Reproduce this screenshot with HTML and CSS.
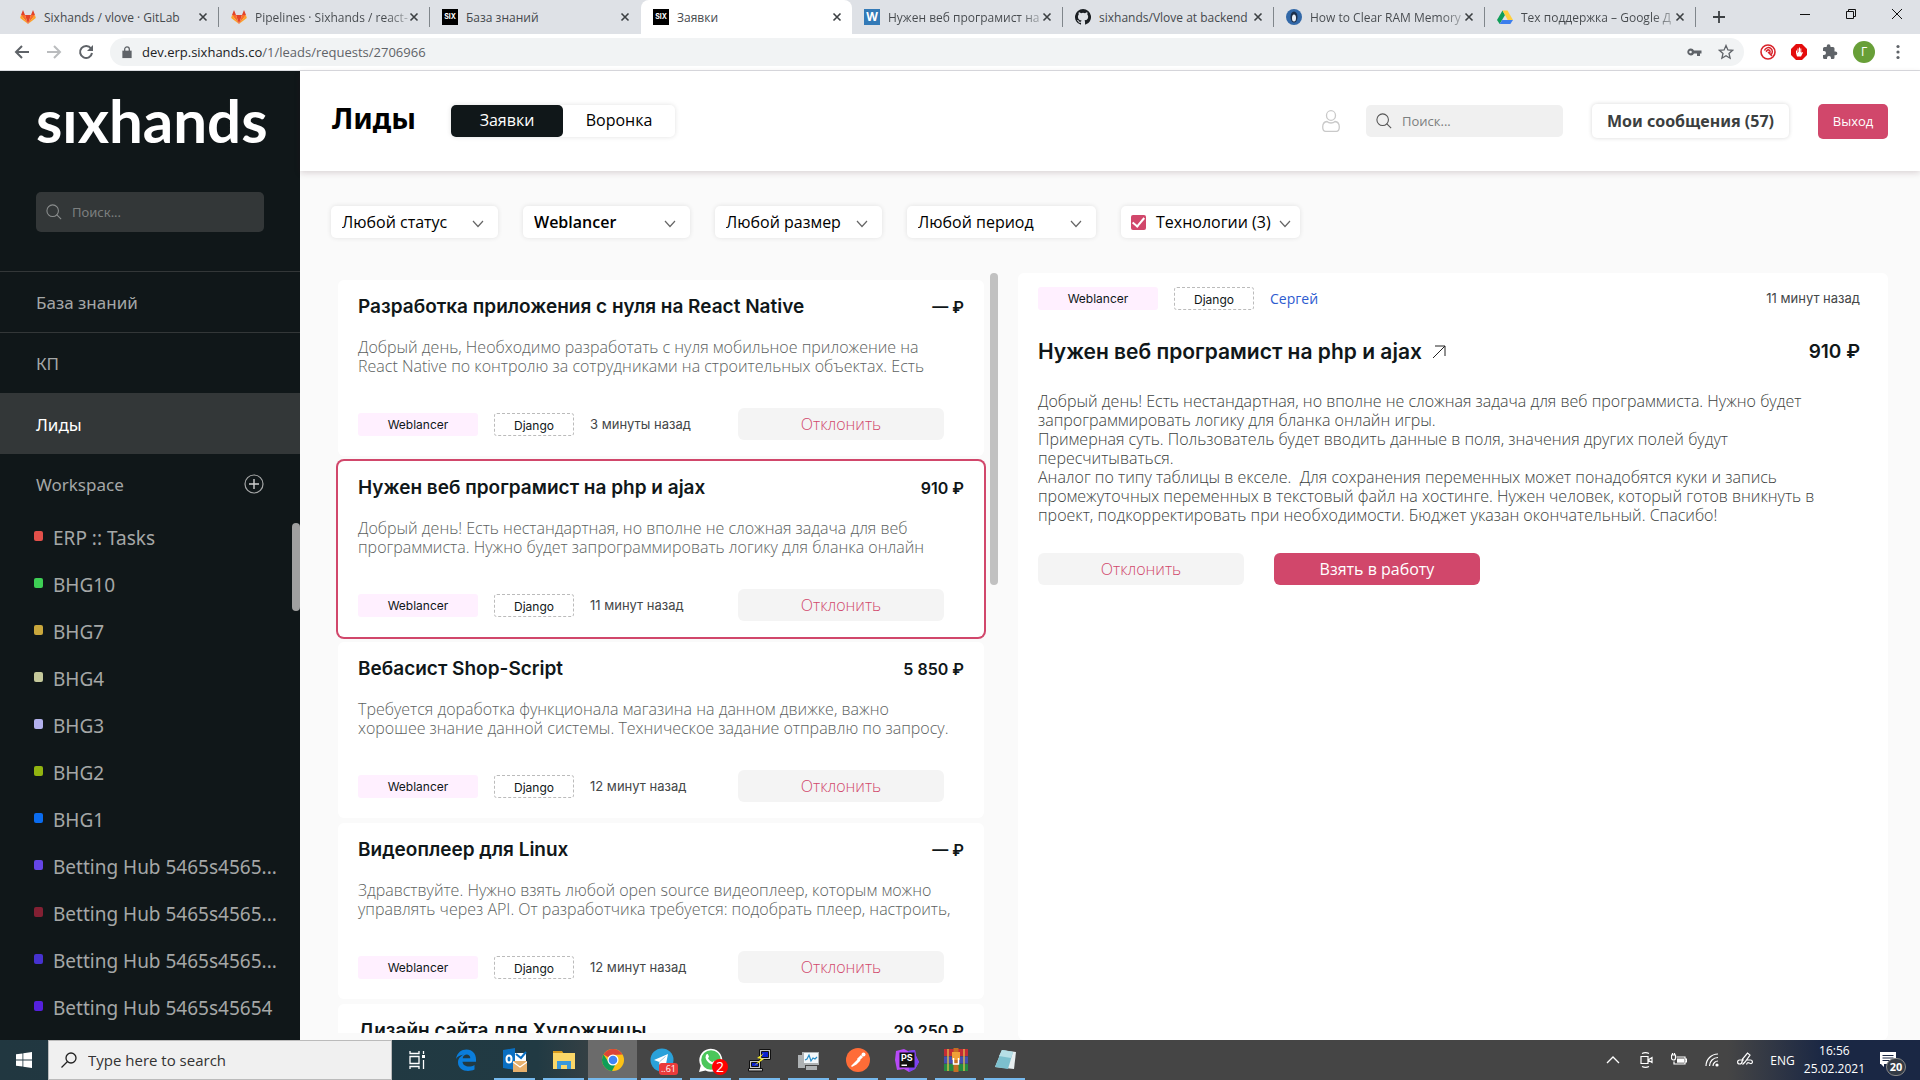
FILE: index.html
```html
<!DOCTYPE html>
<html lang="ru">
<head>
<meta charset="utf-8">
<meta name="viewport" content="width=device-width, initial-scale=1">
<title>Заявки</title>
<link rel="stylesheet" href="styles.css">
</head>
<body>
<svg class="sprite" aria-hidden="true">
  <symbol id="gitlab" viewBox="0 0 16 16"><path fill="#e24329" d="M8 15 5 6h6z"/><path fill="#fc6d26" d="M8 15 5 6H1zM8 15l3-9h4z"/><path fill="#fca326" d="M1 6 .2 9 8 15zM15 6l.8 3L8 15z"/><path fill="#e24329" d="M1 6 3 1l2 5zM15 6l-2-5-2 5z"/></symbol>
  <symbol id="close" viewBox="0 0 10 10"><path d="m1.500 1.500 7 7m0-7-7 7" stroke="#3c4043" stroke-width="1.600"/></symbol>
  <symbol id="chevron" viewBox="0 0 12 8"><path d="m1 1 5 5.500L11 1" fill="none" stroke="#666" stroke-width="1.200"/></symbol>
  <symbol id="lens" viewBox="0 0 18 18"><circle cx="7.500" cy="7.500" r="6.500" fill="none" stroke="currentColor" stroke-width="1.200"/><path d="m12 12 5 5" stroke="currentColor" stroke-width="1.200"/></symbol>
</svg>

<header class="browser">
  <div class="tabstrip">
    <div class="tab"><svg class="fav"><use href="#gitlab"/></svg><span class="tab-name">Sixhands / vlove · GitLab</span><svg class="x"><use href="#close"/></svg></div>
    <div class="tab"><svg class="fav"><use href="#gitlab"/></svg><span class="tab-name tab-fade">Pipelines · Sixhands / react-</span><svg class="x"><use href="#close"/></svg></div>
    <div class="tab"><span class="fav fav-six">SIX</span><span class="tab-name">База знаний</span><svg class="x"><use href="#close"/></svg></div>
    <div class="tab tab-active"><span class="fav fav-six">SIX</span><span class="tab-name">Заявки</span><svg class="x"><use href="#close"/></svg></div>
    <div class="tab"><span class="fav fav-w">W</span><span class="tab-name tab-fade">Нужен веб програмист на</span><svg class="x"><use href="#close"/></svg></div>
    <div class="tab"><svg class="fav" viewBox="0 0 16 16"><path fill="#1b1f23" d="M8 0a8 8 0 0 0-2.530 15.590c.4.070.55-.17.55-.38v-1.490c-2 .37-2.530-.49-2.690-.94-.09-.23-.48-.94-.82-1.130-.28-.15-.68-.52 0-.53.63 0 1.080.58 1.230.82.72 1.210 1.870.87 2.330.66.07-.52.28-.87.51-1.070-1.780-.2-3.640-.89-3.640-3.950 0-.87.310-1.590.82-2.150-.08-.2-.36-1.020.08-2.120 0 0 .67-.21 2.200.82a7.600 7.600 0 0 1 4 0c1.530-1.040 2.200-.82 2.200-.82.44 1.100.16 1.920.08 2.120.51.56.82 1.270.82 2.150 0 3.070-1.870 3.750-3.650 3.950.29.25.54.73.54 1.480v2.200c0 .21.15.46.55.38A8 8 0 0 0 8 0"/></svg><span class="tab-name">sixhands/Vlove at backend</span><svg class="x"><use href="#close"/></svg></div>
    <div class="tab"><svg class="fav" viewBox="0 0 16 16"><circle cx="8" cy="8" r="8" fill="#3268a8"/><ellipse cx="8" cy="8" rx="3.500" ry="5.500" fill="#1c2f4a"/><ellipse cx="8" cy="9" rx="2" ry="3.500" fill="#e9eef5"/></svg><span class="tab-name tab-fade">How to Clear RAM Memory</span><svg class="x"><use href="#close"/></svg></div>
    <div class="tab"><svg class="fav" viewBox="0 0 16 16"><path fill="#0f9d58" d="M5.500 1.500 0 11l2.700 4L8 6z"/><path fill="#ffcf3f" d="M5.500 1.500h5L16 11h-5.300z"/><path fill="#3b7ded" d="M2.700 15h10.600L16 11H5.200z"/></svg><span class="tab-name tab-fade">Тех поддержка – Google Д</span><svg class="x"><use href="#close"/></svg></div>
    <svg class="plus" viewBox="0 0 14 14"><path d="M7 1v12M1 7h12" stroke="#3c4043" stroke-width="1.800"/></svg>
    <div class="window-buttons">
      <svg viewBox="0 0 12 12"><path d="M1 6.500h10" stroke="#111"/></svg>
      <svg viewBox="0 0 12 12"><path d="M1.500 3.500h7v7h-7zM3.500 3.500v-2h7v7h-2" fill="none" stroke="#111"/></svg>
      <svg viewBox="0 0 12 12"><path d="m1 1 10 10M11 1 1 11" stroke="#111"/></svg>
    </div>
  </div>
  <div class="toolbar">
    <svg class="tool" viewBox="0 0 16 16"><path d="M15 8H2m6-6L2 8l6 6" fill="none" stroke="#5f6368" stroke-width="2"/></svg>
    <svg class="tool" viewBox="0 0 16 16"><path d="M1 8h13M8 2l6 6-6 6" fill="none" stroke="#babcbe" stroke-width="2"/></svg>
    <svg class="tool" viewBox="0 0 16 16"><path d="M13 4.500A6 6 0 1 0 14 9" fill="none" stroke="#5f6368" stroke-width="2"/><path d="M15 1v6H9z" fill="#5f6368"/></svg>
    <div class="address">
      <svg class="lock" viewBox="0 0 10 14"><path fill="#5f6368" d="M0 5h10v8H0z"/><path d="M2.500 6V3.500a2.500 2.500 0 0 1 5 0V6" fill="none" stroke="#5f6368" stroke-width="1.400"/></svg>
      <span class="url">dev.erp.sixhands.co<span class="url-path">/1/leads/requests/2706966</span></span>
      <svg class="tool" viewBox="0 0 16 16"><path fill="#5f6368" fill-rule="evenodd" d="M4.500 4.500A3.500 3.500 0 1 0 8 9.500h3V12h3V9.500h1.500v-3H8a3.500 3.500 0 0 0-3.500-2m0 2.200a1.300 1.300 0 1 1 0 2.600 1.300 1.300 0 0 1 0-2.600"/></svg>
      <svg class="tool" viewBox="0 0 16 16"><path d="m8 1.500 1.900 4.400 4.700.4L11 9.500l1.100 4.700L8 11.700l-4.100 2.500L5 9.500 1.400 6.300l4.700-.4z" fill="none" stroke="#5f6368" stroke-width="1.300"/></svg>
    </div>
    <div class="extensions">
      <svg class="tool" viewBox="0 0 16 16"><circle cx="8" cy="8" r="7" fill="none" stroke="#d8232a" stroke-width="1.600"/><path d="M4.500 6.500a4 4 0 1 1 6 4.500M8 8l4 4M6.500 8A1.800 1.800 0 1 1 9.500 9" fill="none" stroke="#d8232a" stroke-width="1.500"/></svg>
      <svg class="tool" viewBox="0 0 16 16"><path fill="#e40d0d" d="M5 0h6l5 5v6l-5 5H5l-5-5V5z"/><path fill="#fff" d="M5 6.500V9l1 3.500h4L12 8.500l-1-.5-.7 1V4.500h-1V8H9V3.500H8V8h-.5V4.500h-1V9H6V6.500z"/></svg>
      <svg class="tool" viewBox="0 0 16 16"><path fill="#5f6368" d="M13.500 7.500h-1v-3a1.500 1.500 0 0 0-1.500-1.500H8.500v-.8a1.900 1.900 0 0 0-3.800 0V3H2.500A1.500 1.500 0 0 0 1 4.500V7h1a2 2 0 0 1 0 4H1v2.500A1.500 1.500 0 0 0 2.500 15H5v-1a2 2 0 0 1 4 0v1h2a1.500 1.500 0 0 0 1.500-1.500v-2.300h1a1.850 1.850 0 0 0 0-3.700"/></svg>
      <span class="avatar">Г</span>
      <svg class="tool" viewBox="0 0 16 16"><g fill="#5f6368"><circle cx="8" cy="2.500" r="1.600"/><circle cx="8" cy="8" r="1.600"/><circle cx="8" cy="13.500" r="1.600"/></g></svg>
    </div>
  </div>
</header>

<div class="app">
  <aside class="sidebar">
    <div class="logo">sıxhands</div>
    <label class="side-search"><svg class="lens"><use href="#lens"/></svg><input class="search-input" type="search" placeholder="Поиск..." aria-label="Поиск по меню"></label>
    <nav class="menu">
      <a class="menu-item" href="#">База знаний</a>
      <a class="menu-item" href="#">КП</a>
      <a class="menu-item menu-active" href="#">Лиды</a>
    </nav>
    <div class="workspace-head"><span>Workspace</span><button class="add" aria-label="Добавить"><svg viewBox="0 0 20 20"><circle cx="10" cy="10" r="9" fill="none" stroke="#a5a7a7" stroke-width="1.200"/><path d="M10 5v10M5 10h10" stroke="#d0d1d1" stroke-width="1.400"/></svg></button></div>
    <div class="workspace">
      <div class="projects">
        <a class="project c1" href="#">ERP :: Tasks</a>
        <a class="project c2" href="#">BHG10</a>
        <a class="project c3" href="#">BHG7</a>
        <a class="project c4" href="#">BHG4</a>
        <a class="project c5" href="#">BHG3</a>
        <a class="project c6" href="#">BHG2</a>
        <a class="project c7" href="#">BHG1</a>
        <a class="project c8" href="#">Betting Hub 5465s4565...</a>
        <a class="project c9" href="#">Betting Hub 5465s4565...</a>
        <a class="project c10" href="#">Betting Hub 5465s4565...</a>
        <a class="project c11" href="#">Betting Hub 5465s45654</a>
      </div>
      <div class="side-thumb"></div>
    </div>
  </aside>

  <main class="main">
    <div class="topbar">
      <h1 class="page-title">Лиды</h1>
      <div class="switch"><button class="switch-btn switch-on">Заявки</button><button class="switch-btn">Воронка</button></div>
      <svg class="user" viewBox="0 0 18 22"><ellipse cx="9" cy="5.500" rx="4.500" ry="4.800" fill="none" stroke="#c9c9c9" stroke-width="1.300"/><path d="M5 11.500c-3 .3-4.300 2-4.300 5.500 0 3 .8 4.300 3 4.300h10.600c2.200 0 3-1.300 3-4.300 0-3.500-1.300-5.200-4.300-5.500-2 2-6 2-8 0z" fill="none" stroke="#c9c9c9" stroke-width="1.300"/></svg>
      <label class="top-search"><svg class="lens"><use href="#lens"/></svg><input class="search-input" type="search" placeholder="Поиск..." aria-label="Поиск"></label>
      <button class="messages">Мои сообщения (57)</button>
      <button class="exit">Выход</button>
    </div>

    <div class="filters">
      <label class="filter"><select class="filter-select" aria-label="Статус"><option>Любой статус</option></select><svg class="chev"><use href="#chevron"/></svg></label>
      <label class="filter"><select class="filter-select strong" aria-label="Площадка"><option>Weblancer</option></select><svg class="chev"><use href="#chevron"/></svg></label>
      <label class="filter"><select class="filter-select" aria-label="Размер"><option>Любой размер</option></select><svg class="chev"><use href="#chevron"/></svg></label>
      <label class="filter filter-wide"><select class="filter-select" aria-label="Период"><option>Любой период</option></select><svg class="chev"><use href="#chevron"/></svg></label>
      <label class="filter filter-tech"><input class="tick" type="checkbox" checked><span>Технологии (3)</span><svg class="chev"><use href="#chevron"/></svg></label>
    </div>

    <div class="content">
      <section class="list">
        <div class="cards">
          <article class="card">
            <div class="card-head"><h2 class="card-title">Разработка приложения с нуля на React Native</h2><span class="price">— ₽</span></div>
            <p class="card-text">Добрый день, Необходимо разработать с нуля мобильное приложение на<br>React Native по контролю за сотрудниками на строительных объектах. Есть</p>
            <div class="card-foot"><span class="chip">Weblancer</span><span class="tag">Django</span><span class="time">3 минуты назад</span><button class="btn">Отклонить</button></div>
          </article>
          <article class="card card-selected">
            <div class="card-head"><h2 class="card-title">Нужен веб програмист на php и ajax</h2><span class="price">910 ₽</span></div>
            <p class="card-text">Добрый день! Есть нестандартная, но вполне не сложная задача для веб<br>программиста. Нужно будет запрограммировать логику для бланка онлайн</p>
            <div class="card-foot"><span class="chip">Weblancer</span><span class="tag">Django</span><span class="time">11 минут назад</span><button class="btn">Отклонить</button></div>
          </article>
          <article class="card">
            <div class="card-head"><h2 class="card-title">Вебасист Shop-Script</h2><span class="price">5 850 ₽</span></div>
            <p class="card-text">Требуется доработка функционала магазина на данном движке, важно<br>хорошее знание данной системы. Техническое задание отправлю по запросу.</p>
            <div class="card-foot"><span class="chip">Weblancer</span><span class="tag">Django</span><span class="time">12 минут назад</span><button class="btn">Отклонить</button></div>
          </article>
          <article class="card">
            <div class="card-head"><h2 class="card-title">Видеоплеер для Linux</h2><span class="price">— ₽</span></div>
            <p class="card-text">Здравствуйте. Нужно взять любой open source видеоплеер, которым можно<br>управлять через API. От разработчика требуется: подобрать плеер, настроить,</p>
            <div class="card-foot"><span class="chip">Weblancer</span><span class="tag">Django</span><span class="time">12 минут назад</span><button class="btn">Отклонить</button></div>
          </article>
          <article class="card">
            <div class="card-head"><h2 class="card-title">Дизайн сайта для Художницы</h2><span class="price">29 250 ₽</span></div>
          </article>
        </div>
        <div class="list-thumb"></div>
      </section>

      <section class="detail">
        <div class="detail-meta"><span class="chip">Weblancer</span><span class="tag">Django</span><a class="author" href="#">Сергей</a><span class="time time-end">11 минут назад</span></div>
        <div class="detail-head">
          <h2 class="detail-title">Нужен веб програмист на php и ajax</h2>
          <a href="#" class="open" aria-label="Открыть"><svg viewBox="0 0 14 14"><path d="M1 13 13 1M3 1h10v10" fill="none" stroke="#222"/></svg></a>
          <span class="detail-price">910 ₽</span>
        </div>
        <p class="detail-text">Добрый день! Есть нестандартная, но вполне не сложная задача для веб программиста. Нужно будет<br>запрограммировать логику для бланка онлайн игры.<br>Примерная суть. Пользователь будет вводить данные в поля, значения других полей будут<br>пересчитываться.<br>Аналог по типу таблицы в екселе.&nbsp; Для сохранения переменных может понадобятся куки и запись<br>промежуточных переменных в текстовый файл на хостинге. Нужен человек, который готов вникнуть в<br>проект, подкорректировать при необходимости. Бюджет указан окончательный. Спасибо!</p>
        <div class="detail-actions"><button class="btn">Отклонить</button><button class="btn btn-primary">Взять в работу</button></div>
      </section>
    </div>
  </main>
</div>

<footer class="taskbar">
  <div class="start"><svg viewBox="0 0 16 16"><path fill="#fff" d="m0 2.300 6.500-.9v6.200H0zM7.300 1.300 16 0v7.600H7.300zM0 8.400h6.500v6.200L0 13.700zM7.300 8.400H16V16l-8.700-1.300z"/></svg></div>
  <label class="task-search"><svg viewBox="0 0 16 16"><circle cx="10" cy="6" r="5" fill="none" stroke="#222" stroke-width="1.300"/><path d="M6.500 9.500 .5 15.500" stroke="#222" stroke-width="1.300"/></svg><input class="task-input" type="search" placeholder="Type here to search" aria-label="Search"></label>
  <div class="apps">
    <span class="appicon view"><svg viewBox="0 0 24 24"><path d="M5 8.500h9v7H5zM5 3v2.500h9V3M5 21v-2.500h9V21M18.500 3v3M18.500 12v9" fill="none" stroke="#fff" stroke-width="1.300"/><path fill="#fff" d="M17 7h3v3h-3z"/></svg></span>
    <span class="appicon"><svg viewBox="0 0 24 24"><path fill="#0a7ddb" d="M2 11C3 4.500 7.500 1.500 12.500 1.500c6 0 9.500 4.500 9.500 9.500v2.800H8.500c.3 5 7.500 6 12 3.200v4.500C13 25 4 22 4 14.500c0-4 2.500-6.500 6-8C5.500 7 3 9 2 11m6.700-.8h7.600c0-5-7-5-7.600 0"/></svg></span>
    <span class="appicon open-app"><svg viewBox="0 0 24 24"><path fill="#0a6fc2" d="m0 2 12-2v22L0 20z"/><path fill="#fff" d="M12 5h11v10H12z"/><path d="m13 6 5 4 5-6" fill="none" stroke="#0a6fc2" stroke-width="2"/><ellipse cx="6" cy="11" rx="2.500" ry="3.500" fill="none" stroke="#fff" stroke-width="2"/><path fill="#e8b06c" d="M10 13h15v11H10z"/><path d="m10 14 7 5 7-5" fill="none" stroke="#fff" stroke-width="1.200"/></svg></span>
    <span class="appicon open-app"><svg viewBox="0 0 24 24"><path fill="#d99b1c" d="M1 3h9l2 3H1z"/><path fill="#fbd768" d="M1 5h22v16H1z"/><path fill="#3a98dc" d="M5 13h14v8h-4v-4H9v4H5z"/></svg></span>
    <span class="appicon open-app current"><svg viewBox="0 0 24 24"><circle cx="12" cy="12" r="11" fill="#fbc116"/><path fill="#db4437" d="M12 12 2.500 6.500A11 11 0 0 1 21.500 6.500L12 7z"/><path fill="#0f9d58" d="M2.500 6.500A11 11 0 0 0 11 23l4.500-8.500L12 12 7.500 14z"/><circle cx="12" cy="12" r="5.500" fill="#fff"/><circle cx="12" cy="12" r="4.300" fill="#4285f4"/></svg></span>
    <span class="appicon open-app"><svg viewBox="0 0 24 24"><circle cx="12" cy="12" r="11.500" fill="#2aa1da"/><path fill="#fff" d="m4 12 14-6-2.500 12.500-4-3-2.200 2v-3.500z"/><path d="m9.500 13.800 6-5.300" stroke="#9cc9e2"/></svg><b class="badge badge-tg">..61</b></span>
    <span class="appicon open-app"><svg viewBox="0 0 24 24"><path fill="#fff" d="m0 24 1.700-6.200A11.500 11.500 0 1 1 6.500 22.500z"/><circle cx="12" cy="12" r="9.800" fill="#4bc65a"/><path fill="#fff" d="M7 7c1-1.500 2-1 2.300 0l.7 1.800-1 1.400c1 2 2.500 3.200 4.500 4l1.300-1.500 2.700 1.300c-.2 2-2 3-4 2.500C10 15.500 7 12.500 6.500 9.500z"/></svg><b class="badge badge-wa">2</b></span>
    <span class="appicon open-app"><svg viewBox="0 0 24 24"><g stroke="#111"><path fill="#c8c8c8" d="M11.500 1.500h11v10h-11zM1.500 12.500h11v8h-11zM.5 20.500h14v2.500H.5z"/><path fill="#0a20d0" d="M13.500 3.500h7v6h-7zM3.500 14.500h7v4h-7z"/></g><path fill="#f8ed23" d="m16 5-7 5 4 1-7 7 10-7-4-1z"/></svg></span>
    <span class="appicon open-app"><svg viewBox="0 0 24 24"><path fill="#aeb2b4" d="M1 7h7v13H1zM5 4h17v13H5zM9 18h11v4H9z"/><path fill="#f3f8fb" d="M7 5h14v10H7z"/><path d="m8 12 2-1 2-4 2 6 2-3 2 1 2-2" fill="none" stroke="#248cc8" stroke-width="1.200"/></svg></span>
    <span class="appicon open-app"><svg viewBox="0 0 24 24"><circle cx="12" cy="12" r="12" fill="#ff6c37"/><path d="m5.500 18.500 8-8M6 18l4-2 4-4" fill="none" stroke="#fff" stroke-width="1.500"/><path d="m12 12 4-4" stroke="#fff" stroke-width="3"/><circle cx="17.500" cy="6.500" r="2" fill="#fff"/></svg></span>
    <span class="appicon open-app"><svg viewBox="0 0 24 24"><path fill="#b74af7" d="m1 3 8-2 4 2 7-1 1 6 3 6-4 7-6 3-5-3-7 1L0 12z"/><path fill="#7b42f0" d="m13 3 7-1 1 6 3 6-4 7-6 3z"/><path fill="#111" d="M4.500 4.500h15v15h-15z"/><path fill="#fff" d="M6.500 16.500h5.500V18H6.500z"/><text x="6" y="13" font-family="Inter, sans-serif" font-size="9" font-weight="700" fill="#fff">PS</text></svg></span>
    <span class="appicon open-app"><svg viewBox="0 0 24 24"><path fill="#c42c35" d="M0 1h24v7H0z"/><path fill="#444fb0" d="M0 8.500h24v7H0z"/><path fill="#258b42" d="M0 16h24v7H0z"/><path d="M4 1v22M20 1v22" stroke="#e5c04b" stroke-width="1.300"/><path fill="#c46e24" d="M9.500 0h5v24h-5z"/><path fill="#f0a038" d="M8 4h8v8H8z"/><path d="M9.500 10v6h5v-6" fill="none" stroke="#fff" stroke-width="1.500"/></svg></span>
    <span class="appicon open-app"><svg viewBox="0 0 24 24"><path fill="#e7eef0" d="m9 2 14 2-2 17-19-2z"/><path fill="#7cc0ce" d="m9 2 11 2-5 17-13-2z"/><path fill="#b7dfe6" d="m9 2 11 2-2 6-12-2z"/></svg></span>
  </div>
  <div class="tray">
    <svg viewBox="0 0 16 16"><path d="m2 11 6-6 6 6" fill="none" stroke="#fff" stroke-width="1.300"/></svg>
    <svg viewBox="0 0 16 16"><path d="M3 4.500h7v7H3zM10 8l4-2.500v5zM4 1.500c2-1 5-1 7 0M4 14.500c2 1 5 1 7 0" fill="none" stroke="#fff" stroke-width="1.200"/></svg>
    <svg viewBox="0 0 16 16"><path d="M5.500 5h8.500v7H3V9.500M14 7h1.500v3H14M.5 3h4v3a2 2 0 0 1-4 0zM1.500 1v2M3.500 1v2" fill="none" stroke="#fff" stroke-width="1.200"/><path fill="#fff" d="M6 6.500h7v4.200H6z"/></svg>
    <svg viewBox="0 0 16 16"><path d="M2 14A12 12 0 0 1 14 2M5.500 14A8.500 8.500 0 0 1 14 5.500M9 14a5 5 0 0 1 5-5" fill="none" stroke="#fff" stroke-width="1.200"/><circle cx="13" cy="13" r="1.600" fill="#fff"/></svg>
    <svg viewBox="0 0 16 16"><path d="M7 8H2.500C0 8 0 12 2.500 12 6 12 5 9 5.500 7l5-6L13 3 8 10l-2.500 2.500M10 8h3.500c2.500 0 2.500 4 0 3.500-2-.5-3-2-4 1" fill="none" stroke="#fff" stroke-width="1.200"/></svg>
    <span class="lang">ENG</span>
    <span class="clock">16:56<br>25.02.2021</span>
    <span class="notices"><svg viewBox="0 0 16 16"><path fill="#fff" d="M0 0h16v12H4v3L1 12H0z"/><path d="M2.500 3.500h11M2.500 6h11M2.500 8.500h8" stroke="#1a2744"/></svg><b class="badge badge-notice">20</b></span>
  </div>
</footer>
</body>
</html>
```
FILE: styles.css
```css
* { box-sizing: border-box; }
body {
  margin: 0;
  height: 100vh;
  display: flex;
  flex-direction: column;
  overflow: hidden;
  background: #fafafa;
  color: #101719;
  font-family: "Open Sans", "Noto Sans", sans-serif;
  font-size: 16px;
}
button, input, select { font: inherit; color: inherit; border: 0; margin: 0; padding: 0; background: none; }
input { min-width: 0; outline: 0; }
a { color: inherit; text-decoration: none; }
h1, h2, p { margin: 0; }
svg { display: block; flex: none; }
.sprite { position: absolute; width: 0; height: 0; }

/* Browser window */
.browser { flex: none; border-bottom: 1px solid #dadce0; background: #fff; }
.tabstrip { display: flex; align-items: center; height: 34px; padding-left: 8px; background: #dee1e6; }
.tab {
  flex: 0 1 211px;
  min-width: 0;
  display: flex;
  align-items: center;
  height: 20px;
  padding: 0 10px 0 12px;
  border-right: 1px solid #80868b;
  font-size: 12px;
  color: #45494d;
}
.tab:nth-child(3) { border-color: transparent; }
.tab-active { height: 34px; border: 0; border-radius: 8px 8px 0 0; background: #fff; }
.fav { flex: none; width: 16px; height: 16px; margin-right: 8px; }
.fav-six { background: #000; color: #fff; font: 700 7px/16px Inter, sans-serif; text-align: center; }
.fav-w { background: #337ab7; color: #fff; font-weight: 700; line-height: 16px; text-align: center; }
.tab-name { flex: 1; width: 0; white-space: nowrap; }
.tab-fade {
  color: transparent;
  background: linear-gradient(to right, #45494d 85%, #b0b4b8);
  -webkit-background-clip: text;
  background-clip: text;
}
.x { width: 10px; height: 10px; }
.plus { width: 14px; height: 14px; margin-left: 16px; }
.window-buttons { display: flex; gap: 34px; margin: 0 17px 6px auto; }
.window-buttons svg { width: 12px; height: 12px; }
.toolbar { display: flex; align-items: center; gap: 16px; height: 36px; padding: 0 14px; }
.tool { width: 16px; height: 16px; }
.address {
  flex: 1;
  display: flex;
  align-items: center;
  gap: 16px;
  height: 28px;
  padding: 0 10px 0 12px;
  border-radius: 14px;
  background: #f1f3f4;
}
.lock { width: 10px; height: 13px; }
.url { flex: 1; margin-left: -6px; font-size: 13px; color: #202124; }
.url-path { color: #5f6368; }
.extensions { display: flex; align-items: center; gap: 15px; }
.avatar { width: 22px; height: 22px; border-radius: 50%; background: #689f38; color: #fff; font-size: 12px; line-height: 22px; text-align: center; }

/* Sidebar */
.app { flex: 1; min-height: 0; display: flex; }
.sidebar { flex: 0 0 300px; min-width: 0; display: flex; flex-direction: column; background: #101719; color: #a5a7a7; font-family: "Noto Sans", sans-serif; }
.logo { height: 121px; padding: 14px 36px 0; color: #fff; font: 700 60px/70px Lato, sans-serif; }
.side-search, .top-search { display: flex; align-items: center; gap: 10px; padding: 0 10px; border-radius: 5px; font-size: 13px; }
.side-search { flex: none; height: 40px; margin: 0 36px 39px; background: #333738; color: #8b8e8e; }
.lens { width: 16px; height: 16px; }
.search-input { flex: 1; width: 0; }
.search-input::placeholder { color: #7c7f7f; opacity: 1; }
.menu-item { display: flex; align-items: center; height: 61px; padding: 0 36px; border-top: 1px solid #333738; font-size: 17px; }
.menu-active { background: #333738; color: #fff; }
.workspace-head { display: flex; align-items: center; justify-content: space-between; height: 60px; padding: 0 36px; font-size: 17px; }
.add svg { width: 20px; height: 20px; }
.workspace { flex: 1; min-height: 0; display: flex; overflow: hidden; }
.projects { flex: 1; min-width: 0; }
.project { display: flex; align-items: center; gap: 10px; height: 47px; padding-left: 34px; font-size: 19px; white-space: nowrap; }
.project::before { content: ""; width: 9px; height: 10px; border-radius: 2px; background: var(--mark); margin-bottom: 4px; }
.c1 { --mark: #e2504a; }
.c2 { --mark: #3ecf55; }
.c3 { --mark: #c9a73c; }
.c4 { --mark: #c5c99b; }
.c5 { --mark: #b3b1ee; }
.c6 { --mark: #92b410; }
.c7 { --mark: #0a6cf0; }
.c8 { --mark: #6545e6; }
.c9 { --mark: #832033; }
.c10 { --mark: #4632d0; }
.c11 { --mark: #5520dd; }
.side-thumb { width: 8px; height: 88px; margin-top: 9px; border-radius: 4px; background: #a0a0a0; }

/* Top bar */
.main { flex: 1; min-width: 0; display: flex; flex-direction: column; }
.topbar { flex: none; display: flex; align-items: center; height: 100px; padding: 0 32px; background: #fff; box-shadow: 0 2px 6px rgba(60, 20, 30, .16); }
.page-title { width: 119px; padding-bottom: 7px; font: 700 29px/36px "Noto Sans", sans-serif; color: #000; }
.switch { display: flex; border-radius: 5px; box-shadow: 0 0 5px rgba(0, 0, 0, .12); }
.switch-btn { width: 112px; height: 32px; padding-bottom: 2px; border-radius: 5px; color: #000; }
.switch-on { background: #101719; color: #fff; }
.user { width: 18px; height: 22px; margin-left: auto; }
.top-search { width: 197px; height: 32px; margin: 0 29px 0 26px; background: #f0f0f0; color: #555; }
.messages { width: 197px; height: 34px; border-radius: 5px; box-shadow: 0 0 4px rgba(0, 0, 0, .16); color: #3c3f40; font: 700 16px/32px "Noto Sans", sans-serif; white-space: nowrap; }
.exit { width: 70px; height: 35px; margin-left: 29px; border-radius: 5px; background: #d1476b; color: #fff; font-size: 13px; }

/* Filters */
.filters { flex: none; display: flex; flex-wrap: wrap; gap: 25px; padding: 35px 31px; }
.filter { position: relative; display: flex; align-items: center; width: 167px; height: 32px; border-radius: 5px; background: #fff; box-shadow: 0 0 5px rgba(0, 0, 0, .1); color: #000; }
.filter-wide { width: 189px; }
.filter-tech { width: 179px; gap: 10px; padding-left: 10px; white-space: nowrap; }
.filter-select { width: 100%; height: 32px; padding: 0 36px 0 11px; appearance: none; outline: 0; }
.strong { font-weight: 600; }
.chev { position: absolute; right: 14px; top: 14px; width: 12px; height: 8px; pointer-events: none; }
.filter-tech .chev { right: 9px; }
.tick { flex: none; appearance: none; width: 15px; height: 15px; border-radius: 2px; background: #d1476b; display: grid; place-items: center; }
.tick:checked::after { content: ""; width: 5px; height: 10px; margin-bottom: 3px; border: solid #fff; border-width: 0 2px 2px 0; transform: rotate(40deg); }

/* Requests */
.content { flex: 1; min-height: 0; display: flex; gap: 20px; padding: 0 32px 0 36px; }
.list { flex: 0 1 662px; display: flex; gap: 6px; margin-bottom: 7px; overflow: hidden; padding-left: 2px; }
.cards { flex: 1; min-width: 0; display: flex; flex-direction: column; gap: 5px; padding-top: 7px; }
.card { flex: none; height: 176px; padding: 12px 20px 0; border-radius: 6px; background: #fff; }
.card-selected { box-shadow: 0 0 0 2px #d1476b; }
.card-head, .card-foot, .detail-meta, .detail-head { display: flex; align-items: center; }
.card-head { justify-content: space-between; height: 30px; margin-bottom: 16px; }
.card-title { font: 600 19px/30px Inter, sans-serif; }
.price { font: 600 16px/30px Inter, sans-serif; }
.card-text { height: 38px; margin-bottom: 32px; color: #5c5f60; font-weight: 300; line-height: 19px; white-space: nowrap; }
.card-foot { height: 32px; gap: 16px; }
.card-foot .btn { margin: 0 20px 0 auto; }
.chip, .tag { height: 23px; border-radius: 3px; font: 400 12px/23px Inter, sans-serif; text-align: center; }
.chip { width: 120px; background: #fff0ff; }
.tag { width: 80px; border: 1px dashed #bbb; }
.time { color: #444748; font: 400 13px/23px Inter, sans-serif; }
.btn { width: 206px; height: 32px; border-radius: 6px; background: #f4f4f4; color: #d1476b; font-weight: 300; }
.btn-primary { background: #d1476b; color: #fff; font-weight: 400; }
.list-thumb { width: 8px; height: 312px; border-radius: 4px; background: #c1c1c1; }

/* Selected request */
.detail { flex: 1; min-width: 0; padding: 14px 28px 0 20px; border-radius: 6px; background: #fff; }
.detail-meta { gap: 16px; height: 23px; }
.author { color: #2d5bd0; font-size: 14px; }
.time-end { margin-left: auto; }
.detail-head { gap: 10px; height: 32px; margin: 26px 0 24px; }
.detail-title { font: 600 21px/32px Inter, sans-serif; }
.detail-price { font: 600 19px/32px Inter, sans-serif; margin-left: auto; }
.open svg { width: 14px; height: 14px; }
.detail-text { color: #3c3f40; font-weight: 300; line-height: 19px; }
.detail-actions { display: flex; gap: 30px; margin-top: 28px; }

/* Taskbar */
.taskbar { flex: none; display: flex; height: 40px; background: linear-gradient(to right, #213740 0, #213a43 28%, #454545 33%, #454545 90%, #1a2744 95%); color: #fff; }
.start { flex: 0 0 48px; display: grid; place-items: center; }
.start svg, .task-search svg { width: 16px; height: 16px; }
.task-search { flex: 0 0 344px; display: flex; align-items: center; gap: 11px; padding: 0 12px; border: 1px solid #bbb; background: #f0f0f0; }
.task-input { flex: 1; font-size: 15px; }
.task-input::placeholder { color: #333; opacity: 1; }
.apps { display: flex; }
.appicon { position: relative; width: 49px; display: grid; place-items: center; }
.appicon svg { width: 24px; height: 24px; }
.open-app::after { content: ""; position: absolute; left: 4px; right: 4px; bottom: 0; height: 2px; background: #76b9ed; }
.current { background: #6b6b6b; }
.current::after { left: 0; right: 0; }
.badge { position: absolute; font: 400 11px/12px "Open Sans", sans-serif; text-align: center; }
.badge-tg { right: 8px; bottom: 5px; width: 19px; border-radius: 3px; background: #ea3b3b; font-size: 9px; }
.badge-wa { right: 7px; bottom: 5px; width: 16px; border-radius: 8px; background: #f00; font-size: 14px; line-height: 16px; }
.tray { display: flex; align-items: center; gap: 17px; margin-left: auto; padding-right: 24px; font-size: 12px; }
.tray svg { width: 16px; height: 16px; }
.clock { margin: 0 -2px 0 -8px; line-height: 18px; text-align: center; }
.notices { position: relative; }
.badge-notice { left: 6px; top: 6px; width: 20px; border: 1px solid #888; border-radius: 9px; background: #333b46; line-height: 16px; font-weight: 700; }
```
